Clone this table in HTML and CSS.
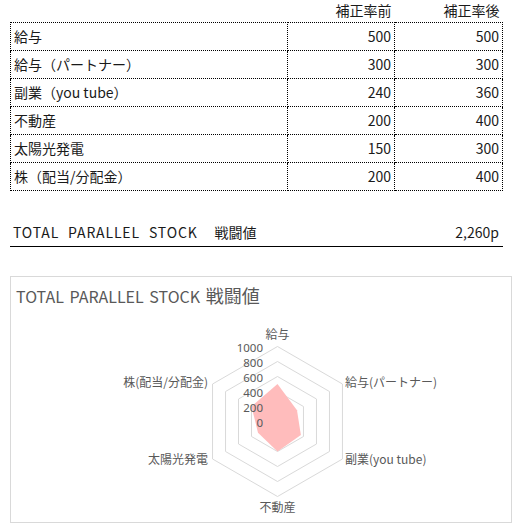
FILE: index.html
```html
<!DOCTYPE html>
<html lang="ja">
<head>
<meta charset="utf-8">
<link rel="stylesheet" href="styles.css">
</head>
<body>
<div class="page">
  <table class="data">
    <thead>
      <tr class="head">
        <th class="name"></th>
        <th class="num">補正率前</th>
        <th class="num">補正率後</th>
      </tr>
    </thead>
    <tbody>
      <tr><td class="name">給与</td><td class="num">500</td><td class="num">500</td></tr>
      <tr><td class="name">給与（パートナー）</td><td class="num">300</td><td class="num">300</td></tr>
      <tr><td class="name">副業（you tube）</td><td class="num">240</td><td class="num">360</td></tr>
      <tr><td class="name">不動産</td><td class="num">200</td><td class="num">400</td></tr>
      <tr><td class="name">太陽光発電</td><td class="num">150</td><td class="num">300</td></tr>
      <tr><td class="name">株（配当/分配金）</td><td class="num">200</td><td class="num">400</td></tr>
    </tbody>
  </table>

  <div class="total">
    <span class="total-label">TOTAL PARALLEL STOCK<span class="total-jp">戦闘値</span></span>
    <span class="total-value">2,260p</span>
  </div>

  <div class="chart">
    <div class="chart-title">TOTAL PARALLEL STOCK <span class="title-jp">戦闘値</span></div>
    <svg class="radar" width="500" height="209" viewBox="0 0 500 209">
      <g transform="translate(266.5,108.5)">
        <g class="grid">
          <polygon points="0,-75 64.95,-37.5 64.95,37.5 0,75 -64.95,37.5 -64.95,-37.5"/>
          <polygon points="0,-60 51.96,-30 51.96,30 0,60 -51.96,30 -51.96,-30"/>
          <polygon points="0,-45 38.97,-22.5 38.97,22.5 0,45 -38.97,22.5 -38.97,-22.5"/>
          <polygon points="0,-30 25.98,-15 25.98,15 0,30 -25.98,15 -25.98,-15"/>
          <polygon points="0,-15 12.99,-7.5 12.99,7.5 0,15 -12.99,7.5 -12.99,-7.5"/>
        </g>
        <polygon class="series" points="0,-37.5 19.49,-11.25 23.38,13.5 0,30 -19.49,11.25 -25.98,-15"/>
        <g class="ticks">
          <text x="-14.5" y="-69.5">1000</text>
          <text x="-14.5" y="-54.5">800</text>
          <text x="-14.5" y="-39.5">600</text>
          <text x="-14.5" y="-24.5">400</text>
          <text x="-14.5" y="-9.5">200</text>
          <text x="-14.5" y="5">0</text>
        </g>
        <g class="cats">
          <text class="mid" x="0" y="-82.5">給与</text>
          <text class="start" x="67.5" y="-34.5">給与(パートナー)</text>
          <text class="start" x="67.5" y="42.5">副業(you tube)</text>
          <text class="mid" x="0" y="90.5">不動産</text>
          <text class="end" x="-69.5" y="42.5">太陽光発電</text>
          <text class="end" x="-69.5" y="-34.5">株(配当/分配金)</text>
        </g>
      </g>
    </svg>
  </div>
</div>
</body>
</html>
```

FILE: styles.css
```css
html, body {
  margin: 0;
  padding: 0;
  background: #fff;
}

body {
  font-family: "Noto Sans CJK JP", "Noto Sans", sans-serif;
  color: #1a1a1a;
}

.page {
  padding: 0 17px 0 10px;
  display: flex;
  flex-direction: column;
}

.data {
  width: 493px;
  border-collapse: collapse;
  font-size: 14px;
  table-layout: fixed;
}

.data th,
.data td {
  padding: 0 3px;
  font-weight: normal;
  line-height: 18px;
}

.data .name {
  width: 271px;
  text-align: left;
}

.data .num {
  text-align: right;
}

.data th.num:nth-child(2) { width: 101px; }

.head {
  height: 22px;
}

.head th {
  vertical-align: top;
  padding-top: 1px;
}

.data tbody tr {
  height: 28px;
}

.data tbody td {
  border: 1px dotted #000;
  vertical-align: middle;
}

.total {
  margin-top: 31px;
  width: 493px;
  display: flex;
  justify-content: space-between;
  align-items: center;
  font-size: 14px;
  line-height: 20px;
  padding: 0 4px 4px 3px;
  box-sizing: border-box;
  border-bottom: 1px solid #000;
}

.total-label {
  word-spacing: 5px;
  letter-spacing: 0.85px;
}

.total-jp {
  margin-left: 17px;
  letter-spacing: 0;
}

.chart {
  margin-top: 29px;
  width: 502px;
  height: 247px;
  box-sizing: border-box;
  border: 1px solid #d9d9d9;
  display: flex;
  flex-direction: column;
}

.chart-title {
  height: 36px;
  padding-left: 5px;
  font-size: 16px;
  color: #595959;
  line-height: 36px;
  word-spacing: 2px;
}

.title-jp {
  font-size: 18px;
}

.radar {
  display: block;
}

.grid polygon {
  fill: none;
  stroke: #d9d9d9;
  stroke-width: 1;
}

.series {
  fill: #ffbcbc;
  stroke: none;
}

.ticks text {
  font-family: "Noto Sans", "Noto Sans CJK JP", sans-serif;
  font-size: 11.5px;
  fill: #595959;
  text-anchor: end;
}

.cats text {
  font-family: "Noto Sans CJK JP", sans-serif;
  font-size: 12px;
  fill: #595959;
}

.cats .mid { text-anchor: middle; }
.cats .start { text-anchor: start; }
.cats .end { text-anchor: end; }
```
